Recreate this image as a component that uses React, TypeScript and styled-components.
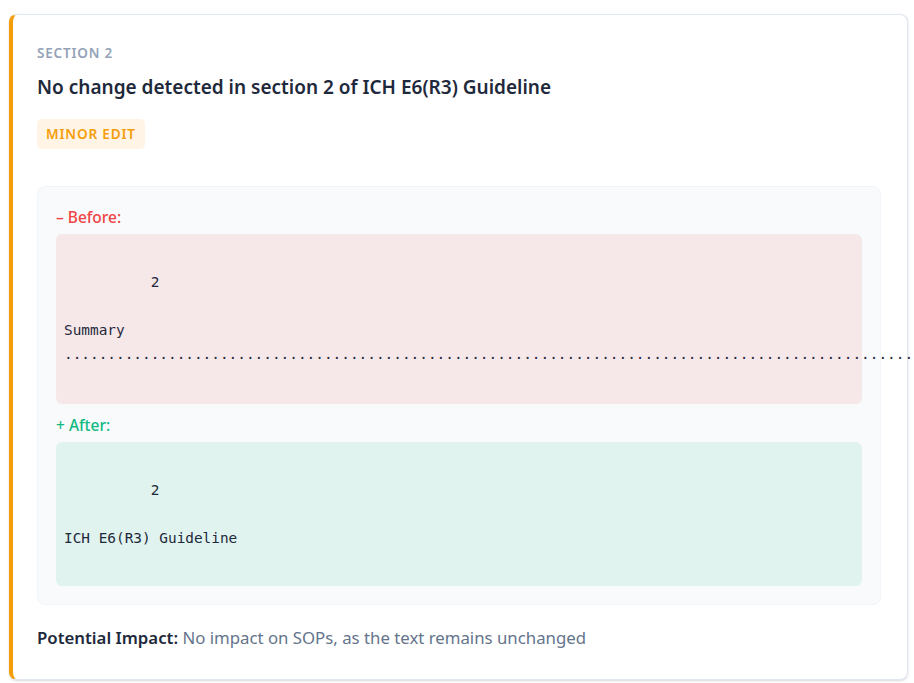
import React from "react";
import styled, { createGlobalStyle } from "styled-components";

const GlobalStyle = createGlobalStyle`
  html, body {
    margin: 0;
    padding: 0;
    background: #ffffff;
    overflow-x: hidden;
  }
  body {
    font-family: "Noto Sans", "Open Sans", sans-serif;
    color: #1e293b;
  }
`;

const Page = styled.div`
  padding: 14px 6px 3px 9px;
`;

const Card = styled.article`
  background: #ffffff;
  border: 1px solid #e2e8f0;
  border-left: 4px solid #f59e0b;
  border-radius: 8px;
  box-shadow: 0 1px 3px rgba(15, 23, 42, 0.1), 0 1px 2px rgba(15, 23, 42, 0.06);
  padding: 28px 26px 29px 24px;
  display: flex;
  flex-direction: column;
`;

const SectionLabel = styled.div`
  font-size: 13.5px;
  line-height: 20px;
  font-weight: 600;
  letter-spacing: 0.06em;
  text-transform: uppercase;
  color: #94a3b8;
`;

const Title = styled.h2`
  margin: 10px 0 0;
  font-size: 19px;
  line-height: 28px;
  font-weight: 600;
  color: #1e293b;
`;

const Badge = styled.span`
  align-self: flex-start;
  margin-top: 18px;
  padding: 5px 9px;
  border-radius: 5px;
  background: #fff4e5;
  color: #f59e0b;
  font-size: 13.6px;
  line-height: 20px;
  font-weight: 600;
  letter-spacing: 0.06em;
  text-transform: uppercase;
`;

const DiffBox = styled.div`
  margin-top: 37px;
  background: #f8fafc;
  border: 1px solid #f1f5f9;
  border-radius: 8px;
  padding: 18px;
  display: flex;
  flex-direction: column;
`;

const DiffLabel = styled.div<{ $kind: "before" | "after" }>`
  font-size: 15.5px;
  line-height: 25px;
  font-weight: 500;
  color: ${(p) => (p.$kind === "before" ? "#ef4444" : "#10b981")};
  margin-top: ${(p) => (p.$kind === "after" ? "9px" : "0")};
  margin-bottom: 4px;
`;

const DiffText = styled.pre<{ $kind: "before" | "after" }>`
  margin: 0;
  padding: ${(p) => (p.$kind === "before" ? "12px 8px 14px" : "12px 8px")};
  border-radius: 6px;
  background: ${(p) =>
    p.$kind === "before" ? "rgba(239, 68, 68, 0.1)" : "rgba(16, 185, 129, 0.1)"};
  font-family: "DejaVu Sans Mono", "Liberation Mono", monospace;
  font-size: 14.4px;
  line-height: 24px;
  color: #1e293b;
  white-space: pre;
  overflow: visible;
`;

const Impact = styled.p`
  margin: 20px 0 0;
  font-size: 16.8px;
  line-height: 25px;
  color: #64748b;
`;

const ImpactLabel = styled.strong`
  font-weight: 600;
  color: #1e293b;
`;

const dots = ".".repeat(110);
const beforeText = `\n          2\n\nSummary\n${dots}\n `;
const afterText = `\n          2\n\nICH E6(R3) Guideline\n `;

export default function App() {
  return (
    <>
      <GlobalStyle />
      <Page>
        <Card>
          <SectionLabel>Section 2</SectionLabel>
          <Title>No change detected in section 2 of ICH E6(R3) Guideline</Title>
          <Badge>Minor Edit</Badge>
          <DiffBox>
            <DiffLabel $kind="before">– Before:</DiffLabel>
            <DiffText $kind="before">{beforeText}</DiffText>
            <DiffLabel $kind="after">+ After:</DiffLabel>
            <DiffText $kind="after">{afterText}</DiffText>
          </DiffBox>
          <Impact>
            <ImpactLabel>Potential Impact:</ImpactLabel> No impact on SOPs, as the text
            remains unchanged
          </Impact>
        </Card>
      </Page>
    </>
  );
}
